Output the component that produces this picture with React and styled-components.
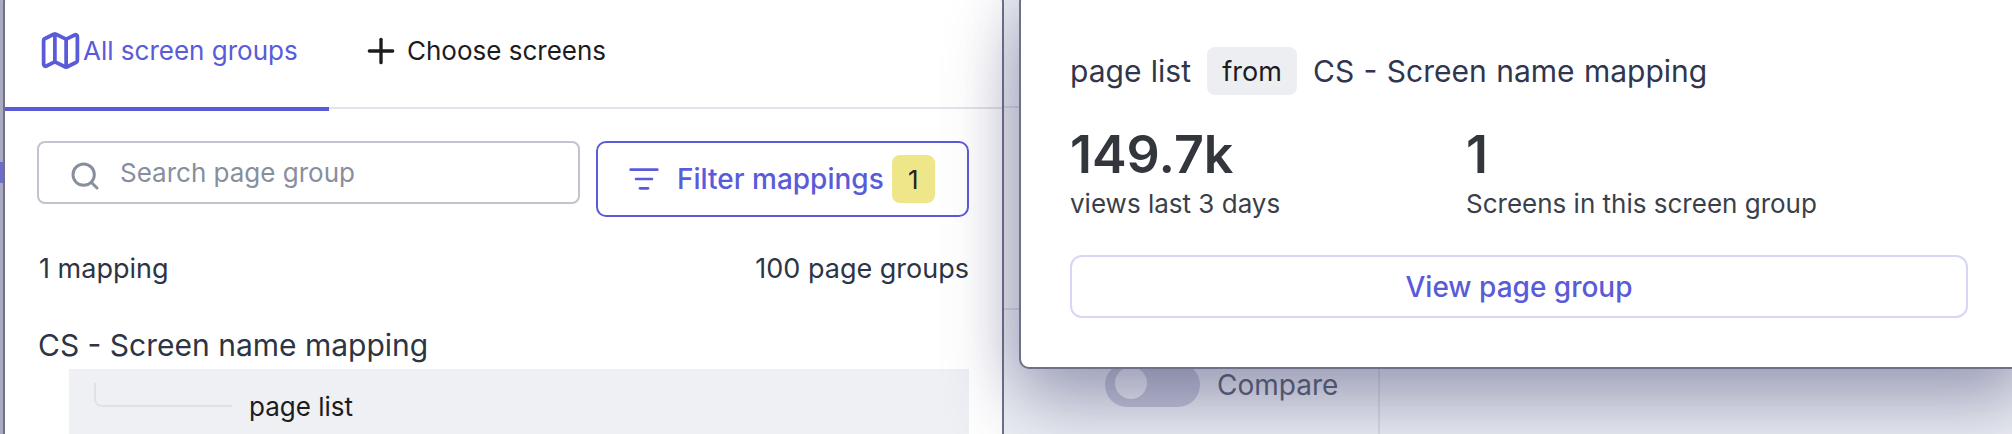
import styled, { createGlobalStyle } from 'styled-components';
import { Map, Plus, Search, ListFilter } from 'lucide-react';

const GlobalStyle = createGlobalStyle`
	html, body {
		margin: 0;
		padding: 0;
		background: #eef0f5;
	}
	* {
		box-sizing: border-box;
	}
`

const Page = styled.div`
	position: relative;
	width: 2012px;
	height: 434px;
	overflow: hidden;
	background: #eef0f5;
	font-family: Inter, "Liberation Sans", sans-serif;
	font-size: 26px;
	color: #2d3545;
`

/* the page behind the two overlays */
const Rail = styled.div`
	position: absolute;
	left: 0;
	top: 0;
	bottom: 0;
	width: 4px;
	background: #a9a9c0;
`

const RailMark = styled.div`
	margin-top: 162px;
	height: 21px;
	background: #6e6ec8;
`

const HeaderLine = styled.div`
	height: 108px;
	border-bottom: 2px solid #d9dae3;
`

const FooterLine = styled.div`
	height: 202px;
	border-bottom: 2px solid #d9dae3;
`

const CompareCard = styled.div`
	width: 1380px;
	height: 124px;
	padding-left: 1105px;
	padding-top: 53px;
	display: flex;
	align-items: flex-start;
	gap: 17px;
	border-right: 2px solid #dcdde4;
`

const Toggle = styled.div`
	width: 95px;
	height: 44px;
	padding: 4px 10px;
	border-radius: 22px;
	background: #c6c8d8;
`

const ToggleKnob = styled.div`
	width: 32px;
	height: 32px;
	border-radius: 50%;
	background: #f1f2f6;
`

const CompareLabel = styled.div`
	font-size: 28px;
	line-height: 44px;
	color: #5c5e70;
`

const Panel = styled.div`
	position: absolute;
	left: 3px;
	top: -8px;
	width: 1001px;
	height: 460px;
	background: #fff;
	border: 2px solid #6f7189;
	border-radius: 10px;
	z-index: 1;
`

const Tabs = styled.div`
	display: flex;
	height: 115px;
	padding-top: 6px;
	border-bottom: 2px solid #e2e3ea;
`

const Tab = styled.div`
	display: flex;
	align-items: center;
	width: ${({ $width }) => $width}px;
	height: 111px;
	padding-left: ${({ $pad }) => $pad}px;
	padding-bottom: 6px;
	gap: ${({ $gap }) => $gap}px;
	color: ${({ $active }) => ($active ? '#5a5bd8' : '#1c1c1e')};
	border-bottom: 4px solid ${({ $active }) => ($active ? '#5a5bd8' : 'transparent')};
	svg {
		flex: none;
	}
`

const Body = styled.div`
	padding: 32px 33px 0 32px;
`

const Controls = styled.div`
	display: flex;
	align-items: flex-start;
	gap: 16px;
`

const SearchBox = styled.div`
	display: flex;
	align-items: center;
	flex: 1;
	height: 63px;
	padding-left: 30px;
	gap: 19px;
	border: 2px solid #c0c4cc;
	border-radius: 8px;
	color: #878f9e;
	svg {
		margin-top: 6px;
	}
`

const FilterButton = styled.div`
	display: flex;
	align-items: center;
	width: 373px;
	height: 76px;
	padding-left: 30px;
	border: 2px solid #5a5bd8;
	border-radius: 10px;
	color: #5a5bd8;
	font-size: 28px;
	font-weight: 500;
`

const FilterLabel = styled.span`
	margin-left: 17px;
	margin-right: 8px;
	white-space: nowrap;
`

const CountBadge = styled.span`
	display: flex;
	align-items: center;
	justify-content: center;
	flex: none;
	width: 43px;
	height: 48px;
	border-radius: 8px;
	background: #efe68a;
	color: #222;
	font-size: 26px;
	font-weight: 400;
`

const Counts = styled.div`
	display: flex;
	justify-content: space-between;
	margin-top: 36px;
	padding-left: 2px;
	font-size: 27px;
	line-height: 32px;
`

const GroupTitle = styled.div`
	margin-top: 42px;
	padding-left: 1px;
	font-size: 30px;
	line-height: 36px;
`

const MappingRow = styled.div`
	display: flex;
	margin-top: 6px;
	margin-left: 32px;
	height: 80px;
	padding: 14px 0 0 25px;
	background: #eff0f4;
	color: #1c1c1e;
`

const TreeCorner = styled.div`
	width: 138px;
	height: 24px;
	border-left: 2px solid #e0e1e6;
	border-bottom: 2px solid #e0e1e6;
	border-bottom-left-radius: 8px;
`

const RowLabel = styled.span`
	margin-left: 17px;
	margin-top: 4px;
	line-height: 40px;
`

const Popover = styled.div`
	position: absolute;
	left: 1019px;
	top: -8px;
	width: 1010px;
	height: 377px;
	padding: 53px 0 0 49px;
	background: #fff;
	border: 2px solid #6f7189;
	border-radius: 10px;
	box-shadow: 0 36px 72px rgba(60, 62, 110, 0.42), -8px 0 50px rgba(60, 62, 110, 0.14);
	z-index: 2;
`

const PopoverTitle = styled.div`
	display: flex;
	align-items: center;
	gap: 16px;
	height: 48px;
	font-size: 30px;
	word-spacing: 1px;
	color: #2f364d;
`

const FromTag = styled.span`
	display: flex;
	align-items: center;
	justify-content: center;
	width: 90px;
	height: 48px;
	border-radius: 8px;
	background: #edeef2;
	color: #1c1c1e;
	font-size: 27px;
`

const Stats = styled.div`
	display: flex;
	margin-top: 30px;
`

const Stat = styled.div`
	width: ${({ $width }) => $width}px;
	color: #3a3f4a;
`

const StatValue = styled.div`
	font-size: 52px;
	font-weight: 600;
	line-height: 60px;
	color: #33373d;
`

const StatLabel = styled.div`
	line-height: 38px;
`

const ViewButton = styled.div`
	display: flex;
	align-items: center;
	justify-content: center;
	width: 898px;
	height: 63px;
	margin-top: 32px;
	border: 2px solid #d6d6f6;
	border-radius: 12px;
	color: #5a5bd8;
	font-size: 28px;
	font-weight: 500;
`

export default function App() {
	return <>
		<GlobalStyle />
		<Page>
			<HeaderLine />
			<FooterLine />
			<CompareCard>
				<Toggle><ToggleKnob /></Toggle>
				<CompareLabel>Compare</CompareLabel>
			</CompareCard>
			<Rail><RailMark /></Rail>
			<Panel>
				<Tabs>
					<Tab $active $width={324} $pad={33} $gap={0}>
						<Map size={45} strokeWidth={2} />
						All screen groups
					</Tab>
					<Tab $width={300} $pad={32} $gap={6}>
						<Plus size={40} strokeWidth={2} />
						Choose screens
					</Tab>
				</Tabs>
				<Body>
					<Controls>
						<SearchBox>
							<Search size={32} strokeWidth={2.2} />
							Search page group
						</SearchBox>
						<FilterButton>
							<ListFilter size={32} strokeWidth={2} />
							<FilterLabel>Filter mappings</FilterLabel>
							<CountBadge>1</CountBadge>
						</FilterButton>
					</Controls>
					<Counts>
						<span>1 mapping</span>
						<span>100 page groups</span>
					</Counts>
					<GroupTitle>CS - Screen name mapping</GroupTitle>
					<MappingRow>
						<TreeCorner />
						<RowLabel>page list</RowLabel>
					</MappingRow>
				</Body>
			</Panel>
			<Popover>
				<PopoverTitle>
					page list
					<FromTag>from</FromTag>
					CS - Screen name mapping
				</PopoverTitle>
				<Stats>
					<Stat $width={396}>
						<StatValue>149.7k</StatValue>
						<StatLabel>views last 3 days</StatLabel>
					</Stat>
					<Stat>
						<StatValue>1</StatValue>
						<StatLabel>Screens in this screen group</StatLabel>
					</Stat>
				</Stats>
				<ViewButton>View page group</ViewButton>
			</Popover>
		</Page>
	</>
}
